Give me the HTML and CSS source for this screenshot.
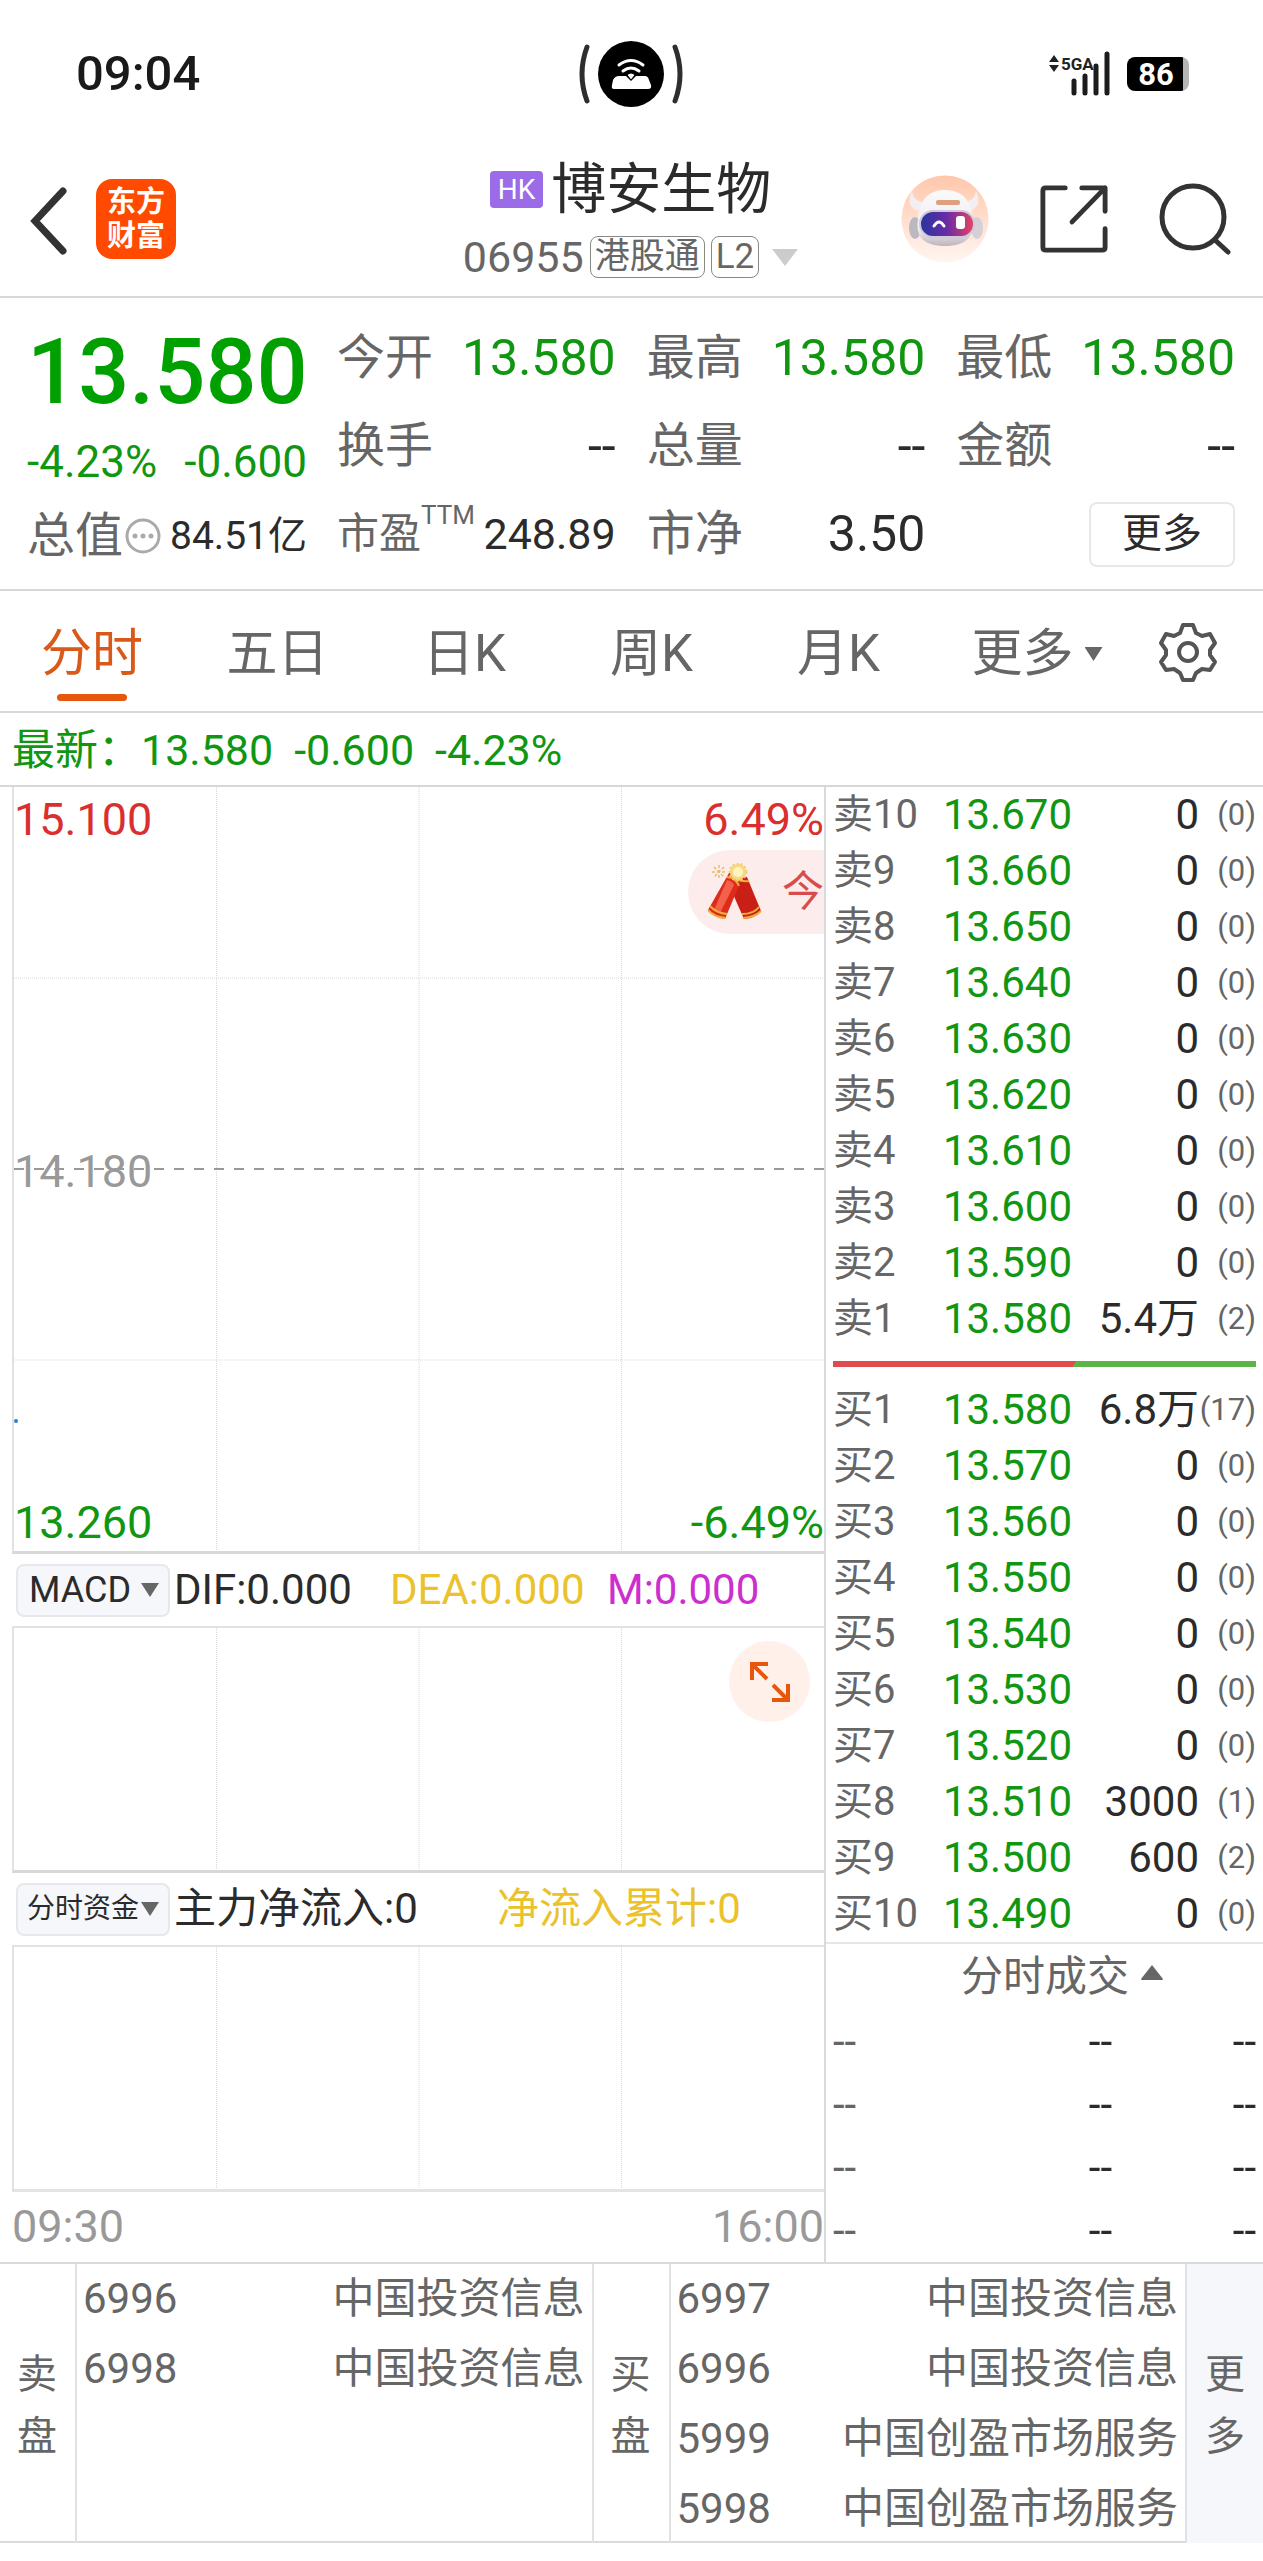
FILE: index.html
```html
<!DOCTYPE html>
<html lang="zh-CN">
<head>
<meta charset="utf-8">
<meta name="viewport" content="width=device-width, initial-scale=1">
<title>博安生物 06955</title>
<link rel="stylesheet" href="styles.css">
</head>
<body>
<div class="status">
  <time class="clock">09:04</time>
  <svg class="island" width="110" height="70" viewBox="0 0 110 70" aria-hidden="true">
    <circle cx="55" cy="35" r="33"/>
    <path d="M11 8Q1 35 11 62M99 8Q109 35 99 62" fill="none" stroke="#2e2e2e" stroke-width="5" stroke-linecap="round"/>
    <path d="M43 37h7l5 5 5-5h9q3 0 4 4l2 5q1 4-3 4H38q-3 0-2-4l1-5q2-4 6-4z" fill="#fff"/>
    <path d="M43 26q12-9 24 0M47 32q8-6 16 0" fill="none" stroke="#fff" stroke-width="3" stroke-linecap="round"/>
    <path d="M51 36q4-4 8 0l-4 5z" fill="#fff" stroke="#000"/>
  </svg>
  <div class="indicators">
    <svg width="62" height="46" viewBox="0 0 62 46" aria-hidden="true">
      <path d="M0 11l5-7 5 7zM0 14l5 7 5-7z" fill="#222"/>
      <text x="12" y="19" class="net">5GA</text>
      <path d="M25 30v12M36 25v17M47 15v27M58 3v39" stroke="#1c1c1c" stroke-width="5" stroke-linecap="round"/>
    </svg>
    <div class="battery">86</div>
  </div>
</div>

<header class="topbar">
  <div class="side">
    <button class="icon-btn" aria-label="返回"><svg width="40" height="78" viewBox="0 0 40 78"><path d="M33 11L5 41l28 30" fill="none" stroke="#333" stroke-width="7" stroke-linecap="round"/></svg></button>
    <a href="#" class="logo"><span>东方</span><span>财富</span></a>
  </div>
  <div class="title">
    <h1><span class="hk">HK</span>博安生物</h1>
    <div class="code">06955<span class="tag">港股通</span><span class="tag">L2</span><svg width="26" height="17" viewBox="0 0 26 17"><path d="M0 0h26L13 17z" fill="#ccc"/></svg></div>
  </div>
  <div class="side tools">
    <button class="icon-btn" aria-label="智能助手"><svg width="88" height="88" viewBox="0 0 88 88">
      <defs>
        <linearGradient id="halo" x2="0" y2="1"><stop stop-color="#ffc7ab"/><stop offset="1" stop-color="#fff6f1"/></linearGradient>
        <linearGradient id="visor"><stop stop-color="#27349f"/><stop offset=".5" stop-color="#6b2ba5"/><stop offset="1" stop-color="#e84561"/></linearGradient>
        <linearGradient id="shell" x2="0" y2="1"><stop stop-color="#fbfafb"/><stop offset=".7" stop-color="#efecef"/><stop offset="1" stop-color="#bdb6bd"/></linearGradient>
      </defs>
      <circle cx="44" cy="44" r="43.5" fill="url(#halo)"/>
      <ellipse cx="14" cy="53" rx="6" ry="11" fill="#bdb7c0"/><ellipse cx="76" cy="53" rx="6" ry="11" fill="#d5cfd6"/>
      <path d="M11 16q-7 15 6 20l9-9q-13 1-15-11zM75 16q7 15-6 20l-9-9q13 1 15-11z" fill="#f3eeef"/>
      <path d="M44 15C26 15 18 27 17 44c-3 18 6 27 27 27s30-9 28-27C71 27 62 15 44 15z" fill="url(#shell)"/>
      <rect x="35" y="25" width="24" height="5" rx="2" fill="#dda080"/>
      <rect x="19" y="36" width="54" height="26" rx="13" fill="url(#visor)" stroke="#cfc9dc" stroke-width="2"/>
      <path d="M33 51q5-8 10 0" fill="none" stroke="#fff" stroke-width="3" stroke-linecap="round"/>
      <rect x="55" y="41" width="9" height="13" rx="3" fill="#fff"/>
    </svg></button>
    <button class="icon-btn" aria-label="分享"><svg width="70" height="70" viewBox="0 0 72 72" fill="none" stroke="#333" stroke-width="5" stroke-linecap="round" stroke-linejoin="round"><path d="M27 4H7q-3 0-3 3v58q0 3 3 3h58q3 0 3-3V46M44 4h24v24M68 4L34 39"/></svg></button>
    <button class="icon-btn" aria-label="搜索"><svg width="72" height="72" viewBox="0 0 72 72" fill="none" stroke="#333" stroke-width="5" stroke-linecap="round"><circle cx="34" cy="34" r="31"/><path d="M56 57l13 12"/></svg></button>
  </div>
</header>

<section class="quote">
  <div class="now">
    <strong class="price">13.580</strong>
    <div class="pair green"><span>-4.23%</span><span>-0.600</span></div>
    <div class="cap"><span class="k">总值</span><svg width="38" height="38" viewBox="0 0 38 38"><circle cx="20" cy="19" r="16" fill="none" stroke="#aaa" stroke-width="3"/><g fill="#aaa"><circle cx="12" cy="19" r="2.5"/><circle cx="20" cy="19" r="2.5"/><circle cx="28" cy="19" r="2.5"/></g></svg><span class="capv">84.51亿</span></div>
  </div>
  <dl class="stats">
    <div><dt>今开</dt><dd class="green">13.580</dd></div>
    <div><dt>最高</dt><dd class="green">13.580</dd></div>
    <div><dt>最低</dt><dd class="green">13.580</dd></div>
    <div><dt>换手</dt><dd>--</dd></div>
    <div><dt>总量</dt><dd>--</dd></div>
    <div><dt>金额</dt><dd>--</dd></div>
    <div class="pe"><dt>市盈<sup>TTM</sup></dt><dd>248.89</dd></div>
    <div><dt>市净</dt><dd>3.50</dd></div>
    <div class="more-cell"><dt hidden>其他</dt><dd><button class="more">更多</button></dd></div>
  </dl>
</section>

<nav class="tabs">
  <button class="tab first active">分时</button>
  <button class="tab">五日</button>
  <button class="tab">日K</button>
  <button class="tab">周K</button>
  <button class="tab">月K</button>
  <button class="tab wide">更多<i class="down"></i></button>
  <button class="tab gear" aria-label="设置"><svg width="62" height="62" viewBox="0 0 62 62" fill="none" stroke="#555" stroke-width="4" stroke-linejoin="round"><path d="M26 4h10l3 8 6 3 8-2 5 9-5 7v5l5 7-5 8-8-1-6 4-3 7H26l-3-7-6-4-8 1-5-8 5-7v-5l-5-7 5-9 8 2 6-3z"/><circle cx="31" cy="31" r="9"/></svg></button>
</nav>

<div class="latest green"><span>最新：13.580</span><span>-0.600</span><span>-4.23%</span></div>

<main class="board">
  <section class="charts">
    <div class="plot main-plot">
      <svg class="grid" aria-hidden="true">
        <g stroke="#d8d8d8" stroke-dasharray="1 1"><line x1="25%" x2="25%" y2="100%"/><line x1="50%" x2="50%" y2="100%"/><line x1="75%" x2="75%" y2="100%"/><line x2="100%" y1="25%" y2="25%"/><line x2="100%" y1="75%" y2="75%"/></g>
        <line x2="100%" y1="50%" y2="50%" stroke="#999" stroke-width="2" stroke-dasharray="10 10"/>
        <circle cx="2" cy="83%" r="2" fill="#2f7fd0"/>
      </svg>
      <div class="axis red"><span>15.100</span><span>6.49%</span></div>
      <div class="axis gray"><span>14.180</span></div>
      <div class="axis green"><span>13.260</span><span>-6.49%</span></div>
      <a href="#" class="festive"><svg width="56" height="58" viewBox="0 0 56 58">
        <path d="M12 2v14M5 9h14M7 4l10 10M17 4L7 14" stroke="#e8bd70" stroke-width="1.5" stroke-dasharray="3 2"/>
        <path d="M28 12l12 2 14 34q-5 7-17 8L22 22z" fill="#c91f14"/>
        <path d="M35 51q12 0 17-7M36 55q12-1 18-7" stroke="#f0ad3d" stroke-width="2" fill="none"/>
        <path d="M22 10q9 1 11 10L18 56Q6 54 1 47z" fill="#de2c1c"/>
        <path d="M20 17q5 1 7 5L13 50l-6-3z" fill="#f4604a"/>
        <path d="M20 14q9 1 12 9M29 16q7 3 13 2M3 43q6 7 17 8M1 47q6 7 17 8" stroke="#f0ad3d" stroke-width="2" fill="none"/>
        <circle cx="31" cy="9" r="8" fill="#f8d98a" stroke="#f5cf7a" stroke-width="3" stroke-dasharray="2 2"/>
        <circle cx="31" cy="9" r="5" fill="#fff3be"/>
      </svg><span>今</span></a>
    </div>
    <div class="legend"><button class="pick">MACD<i class="down"></i></button><span class="c1">DIF:0.000</span><span class="c2">DEA:0.000</span><span class="purple">M:0.000</span></div>
    <div class="plot sub">
      <svg class="grid" aria-hidden="true"><g stroke="#d8d8d8" stroke-dasharray="1 1"><line x1="25%" x2="25%" y2="100%"/><line x1="50%" x2="50%" y2="100%"/><line x1="75%" x2="75%" y2="100%"/></g></svg>
      <button class="expand" aria-label="全屏"><svg width="42" height="42" viewBox="0 0 42 42" fill="none" stroke="#e6570e" stroke-width="4"><path d="M3 19V3h16M3 3l15 15M39 23v16H23M39 39L24 24"/></svg></button>
    </div>
    <div class="legend"><button class="pick cjk">分时资金<i class="down"></i></button><span class="f1">主力净流入:0</span><span class="yellow">净流入累计:0</span></div>
    <div class="plot sub light">
      <svg class="grid" aria-hidden="true"><g stroke="#d8d8d8" stroke-dasharray="1 1"><line x1="25%" x2="25%" y2="100%"/><line x1="50%" x2="50%" y2="100%"/><line x1="75%" x2="75%" y2="100%"/></g></svg>
    </div>
    <div class="times"><span>09:30</span><span>16:00</span></div>
  </section>

  <aside class="depth">
    <table class="book">
      <tbody>
      <tr><th>卖10</th><td>13.670</td><td>0</td><td>(0)</td></tr>
      <tr><th>卖9</th><td>13.660</td><td>0</td><td>(0)</td></tr>
      <tr><th>卖8</th><td>13.650</td><td>0</td><td>(0)</td></tr>
      <tr><th>卖7</th><td>13.640</td><td>0</td><td>(0)</td></tr>
      <tr><th>卖6</th><td>13.630</td><td>0</td><td>(0)</td></tr>
      <tr><th>卖5</th><td>13.620</td><td>0</td><td>(0)</td></tr>
      <tr><th>卖4</th><td>13.610</td><td>0</td><td>(0)</td></tr>
      <tr><th>卖3</th><td>13.600</td><td>0</td><td>(0)</td></tr>
      <tr><th>卖2</th><td>13.590</td><td>0</td><td>(0)</td></tr>
      <tr><th>卖1</th><td>13.580</td><td>5.4万</td><td>(2)</td></tr>
      </tbody>
    </table>
    <div class="ratio"><i></i></div>
    <table class="book">
      <tbody>
      <tr><th>买1</th><td>13.580</td><td>6.8万</td><td>(17)</td></tr>
      <tr><th>买2</th><td>13.570</td><td>0</td><td>(0)</td></tr>
      <tr><th>买3</th><td>13.560</td><td>0</td><td>(0)</td></tr>
      <tr><th>买4</th><td>13.550</td><td>0</td><td>(0)</td></tr>
      <tr><th>买5</th><td>13.540</td><td>0</td><td>(0)</td></tr>
      <tr><th>买6</th><td>13.530</td><td>0</td><td>(0)</td></tr>
      <tr><th>买7</th><td>13.520</td><td>0</td><td>(0)</td></tr>
      <tr><th>买8</th><td>13.510</td><td>3000</td><td>(1)</td></tr>
      <tr><th>买9</th><td>13.500</td><td>600</td><td>(2)</td></tr>
      <tr><th>买10</th><td>13.490</td><td>0</td><td>(0)</td></tr>
      </tbody>
    </table>
    <button class="deals-head">分时成交<svg width="24" height="26" viewBox="0 0 24 26"><path d="M12 1l11 14q0 1-1 1H2q-1 0-1-1z" fill="#666"/></svg></button>
    <table class="deals">
      <tbody>
      <tr><td>--</td><td>--</td><td>--</td></tr>
      <tr><td>--</td><td>--</td><td>--</td></tr>
      <tr><td>--</td><td>--</td><td>--</td></tr>
      <tr><td>--</td><td>--</td><td>--</td></tr>
      </tbody>
    </table>
  </aside>
</main>

<section class="brokers">
  <h2>卖盘</h2>
  <ul>
    <li><span>6996</span><span>中国投资信息</span></li>
    <li><span>6998</span><span>中国投资信息</span></li>
  </ul>
  <h2>买盘</h2>
  <ul>
    <li><span>6997</span><span>中国投资信息</span></li>
    <li><span>6996</span><span>中国投资信息</span></li>
    <li><span>5999</span><span>中国创盈市场服务</span></li>
    <li><span>5998</span><span>中国创盈市场服务</span></li>
  </ul>
  <button class="all">更多</button>
</section>
</body>
</html>
```
FILE: styles.css
```css
* { box-sizing: border-box; }

body {
  margin: 0;
  background: #fff;
  color: #2b2b2b;
  font-family: Roboto, "Noto Sans CJK SC", sans-serif;
  font-size: 42px;
  line-height: 56px;
}

h1, h2, dl, dd, ul { margin: 0; padding: 0; font-weight: 400; }
ul { list-style: none; }
svg { display: block; flex: none; }
a { color: inherit; text-decoration: none; }
button { border: 0; padding: 0; background: none; color: inherit; font: inherit; }
table { border-collapse: collapse; width: 100%; table-layout: fixed; }
th, td { padding: 0; font-weight: 400; text-align: right; white-space: nowrap; }

.green { color: #119611; }
.red { color: #d92f2f; }
.gray { color: #999; }
.yellow, .c2 { color: #ebc22c; }
.purple { color: #cc2ed0; }

.down {
  width: 18px;
  height: 14px;
  background: #666;
  clip-path: polygon(0 0, 100% 0, 50% 100%);
}

/* phone status bar */
.status {
  display: grid;
  grid-template-columns: 1fr auto 1fr;
  align-items: center;
  height: 148px;
  padding: 0 74px 0 76px;
}
.island { margin-right: 4px; }
.clock { font-size: 49px; font-weight: 500; color: #1a1a1a; }
.indicators { display: flex; justify-content: flex-end; align-items: center; gap: 16px; }
.net { font: 700 17px Roboto, sans-serif; fill: #222; }
.battery {
  width: 62px;
  height: 34px;
  padding-right: 4px;
  border-radius: 8px;
  background: linear-gradient(90deg, #000 56px, #b5b5b5 56px);
  color: #fff;
  font-size: 31px;
  font-weight: 700;
  line-height: 35px;
  text-align: center;
}

/* title bar */
.topbar {
  display: grid;
  grid-template-columns: 1fr auto 1fr;
  align-items: center;
  height: 150px;
  padding: 0 32px 6px 30px;
  border-bottom: 2px solid #d8d8d8;
}
.side { display: flex; align-items: center; gap: 26px; }
.tools { justify-content: flex-end; gap: 50px; }
.icon-btn { display: block; line-height: 0; }
.logo {
  display: flex;
  flex-direction: column;
  justify-content: center;
  align-items: center;
  width: 80px;
  height: 80px;
  border-radius: 16px;
  background: #ff4a00;
  color: #fff;
  font-size: 29px;
  font-weight: 700;
  line-height: 34px;
}
.title { padding-top: 4px; }
h1 { display: flex; justify-content: center; align-items: center; gap: 8px; font-size: 55px; line-height: 72px; }
.hk {
  padding: 0 8px;
  border-radius: 4px;
  background: #9c6ce8;
  color: #fff;
  font-size: 28px;
  line-height: 37px;
}
.code { display: flex; align-items: center; gap: 6px; color: #666; font-size: 43px; line-height: 64px; }
.tag { padding: 0 4px; border: 1px solid #888; border-radius: 8px; font-size: 35px; line-height: 40px; }
.code svg { margin-left: 7px; }

/* quote summary */
.quote {
  display: flex;
  gap: 30px;
  height: 293px;
  padding: 16px 28px 0 27px;
  border-bottom: 2px solid #d8d8d8;
}
.now { display: flex; flex-direction: column; width: 280px; }
.price { color: #00a000; font-size: 90px; font-weight: 500; line-height: 118px; text-align: center; }
.pair { display: flex; justify-content: space-between; font-size: 44px; line-height: 60px; }
.cap { display: flex; align-items: center; line-height: 88px; }
.k { font-size: 48px; color: #666; }
.capv { margin-left: auto; font-size: 39px; }
.stats {
  flex: 1;
  display: grid;
  grid-template-columns: repeat(3, 1fr);
  grid-auto-rows: 88px;
  column-gap: 31px;
  font-size: 48px;
  line-height: 88px;
}
.stats div { display: flex; justify-content: space-between; }
.stats dt { color: #666; }
.stats dd { font-size: 50px; }
.stats .pe dt { font-size: 42px; }
.stats .pe dd { font-size: 43px; }
.pe sup { font-size: 26px; line-height: 0; vertical-align: 24px; }
.stats .more-cell { justify-content: flex-end; align-items: center; }
.more {
  display: block;
  width: 146px;
  height: 65px;
  border: 2px solid #e6e8ea;
  border-radius: 8px;
  font-size: 40px;
  line-height: 60px;
}

/* period tabs */
.tabs { display: flex; height: 122px; padding-right: 29px; border-bottom: 2px solid #d8d8d8; color: #666; font-size: 51px; }
.tab { position: relative; flex: 187; display: flex; justify-content: center; align-items: center; gap: 11px; padding-top: 6px; }
.tab.first { flex: 184; }
.tab.wide { flex: 210; }
.tab.gear { flex: 92; padding-top: 2px; }
.tab.active { color: #d9591a; }
.tab.active::after {
  content: "";
  position: absolute;
  bottom: 10px;
  width: 70px;
  height: 7px;
  border-radius: 4px;
  background: #e6570e;
}
.latest { display: flex; gap: 21px; height: 74px; padding-left: 12px; border-bottom: 2px solid #d8d8d8; font-size: 43px; line-height: 74px; }

/* charts beside the order book */
.board { display: grid; grid-template-columns: 826fr 437fr; border-bottom: 2px solid #d8dadc; }
.charts { display: flex; flex-direction: column; padding-left: 12px; border-right: 2px solid #d8dadc; }
.plot { position: relative; border-left: 2px solid #e2e2e2; border-bottom: 3px solid #d8d8d8; }
.grid { position: absolute; inset: 0; width: 100%; height: 100%; }
.main-plot { display: flex; flex-direction: column; justify-content: space-between; height: 767px; padding: 5px 0 0; }
.axis { position: relative; display: flex; justify-content: space-between; font-size: 45px; line-height: 56px; }
.festive {
  position: absolute;
  top: 63px;
  right: 0;
  display: flex;
  justify-content: space-between;
  align-items: center;
  width: 136px;
  height: 84px;
  padding-left: 19px;
  border-radius: 42px 0 0 42px;
  background: #fdecec;
  color: #d94c4c;
}
.legend { display: flex; align-items: center; height: 72px; white-space: nowrap; }
.pick {
  display: flex;
  justify-content: space-between;
  align-items: center;
  width: 154px;
  height: 53px;
  margin: 0 4px;
  padding: 0 9px 0 11px;
  border: 2px solid #e6e8ec;
  border-radius: 8px;
  background: #f5f7fa;
  font-size: 36px;
}
.pick.cjk { padding-left: 9px; font-size: 28px; }
.c1 { flex: 0 0 216px; }
.c2 { flex: 0 0 217px; }
.f1 { flex: 0 0 323px; }
.sub { height: 247px; border-top: 2px solid #e2e2e2; }
.light { border-bottom-color: #e4e4e4; }
.expand {
  position: absolute;
  top: 13px;
  right: 14px;
  display: flex;
  justify-content: center;
  align-items: center;
  width: 81px;
  height: 81px;
  border-radius: 50%;
  background: #fff1ea;
}
.times { display: flex; justify-content: space-between; color: #999; font-size: 45px; line-height: 70px; }

.book td, .book th { height: 56px; line-height: 56px; }
.book th { width: 104px; padding-left: 7px; color: #666; font-size: 40px; text-align: left; }
.book td:nth-child(2) { width: 142px; color: #119611; }
.book td:nth-child(4) { width: 64px; padding-right: 7px; color: #666; font-size: 31px; }
.ratio { height: 35px; padding: 14px 7px 0 7px; }
.ratio i {
  display: block;
  height: 6px;
  background: linear-gradient(125deg, #e04b4b 57%, #5cb446 57%);
}
.deals-head {
  display: flex;
  justify-content: center;
  align-items: center;
  gap: 11px;
  width: 100%;
  height: 68px;
  padding-left: 36px;
  border-top: 2px solid #e4e6e8;
  color: #666;
}
.deals td { height: 63px; line-height: 63px; }
.deals td:first-child { width: 60px; padding-left: 7px; color: #666; text-align: left; }
.deals td:last-child { width: 151px; padding-right: 7px; }

/* broker queues */
.brokers {
  display: grid;
  grid-template-columns: 75px 1fr 77px 1fr 78px;
  height: 279px;
  border-bottom: 2px solid #d8dadc;
  color: #666;
}
.brokers > * + * { border-left: 2px solid #dfe1e4; }
.brokers h2, .all {
  display: flex;
  justify-content: center;
  align-items: center;
  padding: 4px 17px 0;
  font-size: 40px;
  line-height: 62px;
}
.all { background: #f5f7fa; }
.brokers li { display: flex; justify-content: space-between; padding: 0 7px 0 6px; line-height: 70px; }
```
